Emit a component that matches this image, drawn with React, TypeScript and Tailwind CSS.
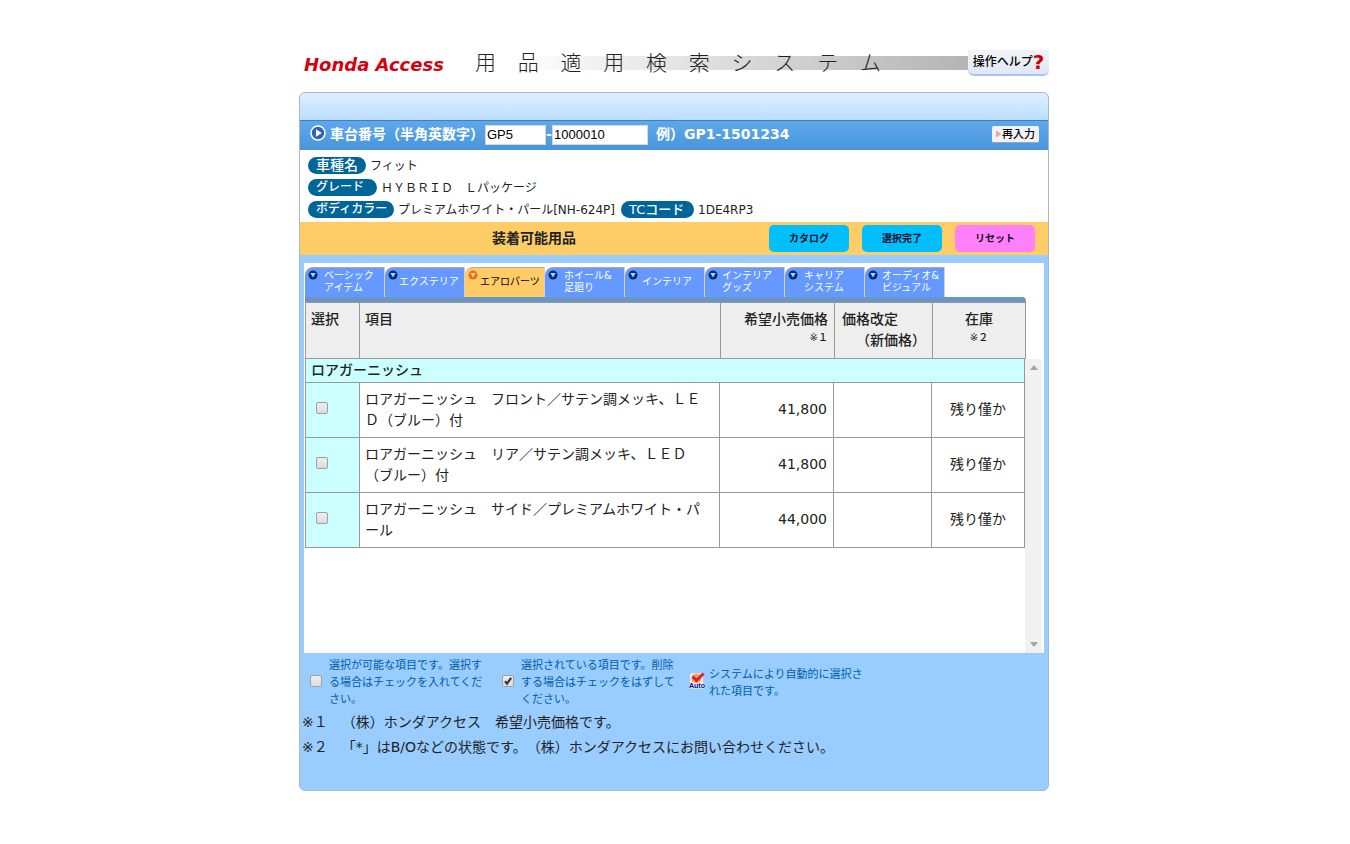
import { useState } from 'react';
import clsx from 'clsx';

interface Tab {
  id: string;
  lines: string[];
  gap: string;
}

interface Item {
  id: string;
  name: string;
  price: string;
  revised: string;
  stock: string;
}

const tabs: Tab[] = [
  { id: 'basic', lines: ['ベーシック', 'アイテム'], gap: 'pl-1.5' },
  { id: 'exterior', lines: ['エクステリア'], gap: 'pl-px' },
  { id: 'aero', lines: ['エアロパーツ'], gap: 'pl-0.5' },
  { id: 'wheel', lines: ['ホイール&', '足廻り'], gap: 'pl-1.5' },
  { id: 'interior', lines: ['インテリア'], gap: 'pl-1' },
  { id: 'goods', lines: ['インテリア', 'グッズ'], gap: 'pl-1' },
  { id: 'carrier', lines: ['キャリア', 'システム'], gap: 'pl-1.5' },
  { id: 'audio', lines: ['オーディオ&', 'ビジュアル'], gap: 'pl-1' },
];

const items: Item[] = [
  { id: 'front', name: 'ロアガーニッシュ　フロント／サテン調メッキ、ＬＥＤ（ブルー）付', price: '41,800', revised: '', stock: '残り僅か' },
  { id: 'rear', name: 'ロアガーニッシュ　リア／サテン調メッキ、ＬＥＤ（ブルー）付', price: '41,800', revised: '', stock: '残り僅か' },
  { id: 'side', name: 'ロアガーニッシュ　サイド／プレミアムホワイト・パール', price: '44,000', revised: '', stock: '残り僅か' },
];

const title = '用品適用検索システム';

const Badge = ({ text, width }: { text: string; width: string }) => (
  <span className={clsx('h-[17px] shrink-0 rounded-full bg-[#006699] pl-2 leading-[17px] font-medium text-white', width)}>
    {text}
  </span>
);

interface CheckProps {
  checked: boolean;
  onChange: () => void;
  id?: string;
  label?: string;
}

const Check = ({ checked, onChange, id, label }: CheckProps) => (
  <span className="relative block size-3 shrink-0">
    <input
      type="checkbox"
      id={id}
      aria-label={label}
      checked={checked}
      onChange={onChange}
      className="block size-3 appearance-none rounded-[2px] border border-[#a0a0a0] bg-linear-to-b from-[#eeeeee] to-[#dcdcdc]"
    />
    {checked && (
      <svg viewBox="0 0 12 12" className="pointer-events-none absolute inset-0 size-3">
        <path d="M3 6.2 5 8.6 9.2 2.8" fill="none" stroke="#333" strokeWidth="2.2" />
      </svg>
    )}
  </span>
);

const TabMark = ({ active }: { active: boolean }) => (
  <svg viewBox="0 0 10 10" className="size-[10px] shrink-0">
    <circle cx="5" cy="5" r="4.5" fill={active ? '#ee6a1c' : '#003080'} />
    <path d="M2.4 3h5.2L5 7.6z" fill={active ? '#ffd890' : '#b8d0ff'} />
  </svg>
);

const AutoMark = () => (
  <svg viewBox="0 0 16 17" className="h-[17px] w-4 shrink-0">
    <path d="M3 1h11v11H1V3z" fill="#fbe9dc" />
    <circle cx="7.5" cy="6.5" r="5" fill="#f2a65a" />
    <path d="M3.5 4.5 7.5 8.5 14.5 1.5" fill="none" stroke="#d81f3a" strokeWidth="3" />
    <text x="0" y="16" fontSize="7" fontWeight="bold" fontFamily="Liberation Sans, sans-serif" fill="#000080" stroke="#fff" strokeWidth="1" paintOrder="stroke">Auto</text>
  </svg>
);

const Columns = () => (
  <colgroup>
    <col className="w-[54px]" />
    <col />
    <col className="w-[114px]" />
    <col className="w-[98px]" />
    <col className="w-[93px]" />
  </colgroup>
);

const App = () => {
  const [frame, setFrame] = useState('GP5');
  const [serial, setSerial] = useState('1000010');
  const [activeTab, setActiveTab] = useState('aero');
  const [selected, setSelected] = useState<string[]>([]);
  const [legend, setLegend] = useState({ free: false, used: true });

  const toggle = (id: string) =>
    setSelected(prev => (prev.includes(id) ? prev.filter(x => x !== id) : [...prev, id]));

  return (
    <div lang="ja" className="min-h-screen bg-white pt-[50px] pr-0.5 pb-12 font-['DejaVu_Sans','Noto_Sans_CJK_JP',sans-serif] text-[14px] leading-[21px] text-[#222] [text-spacing-trim:space-all]">
      <div className="mx-auto max-w-[750px]">
        {/* Header */}
        <header className="flex h-[26px] items-center">
          <a href="#" className="w-[176px] shrink-0 pt-1 pl-[5px] text-[18px] leading-6 font-bold whitespace-nowrap text-[#d7000f] italic">Honda Access</a>
          <div className="flex-1 bg-[linear-gradient(to_right,#ffffff_8%,#b4b4b4)] bg-[length:100%_14px] bg-center bg-no-repeat">
            <h1 className="flex w-[406px] justify-between text-[21px] leading-[26px] font-light text-[#222]">
              {title.split('').map((c, i) => (
                <span key={i}>{c}</span>
              ))}
            </h1>
          </div>
          <button type="button" className="flex h-[26px] w-[81px] items-center justify-center rounded-b-md border-b-2 border-[#a9c4ee] bg-linear-to-b from-[#f3f3f6] to-[#dfe8f8] text-[12px] font-medium whitespace-nowrap text-black">
            <span className="-mr-1">操作ヘルプ</span>
            <span className="pl-1 text-[20px] font-bold text-[#cc0000]">?</span>
          </button>
        </header>

        <main className="mt-4 overflow-hidden rounded-md border border-[#a9b8cc] bg-[#99ccff]">
          <div className="h-7 border-b border-[#3f7fc4] bg-linear-to-b from-[#e0efff] to-[#bbddff]" />

          {/* Frame number search */}
          <form className="flex h-[29px] items-center bg-linear-to-b from-[#5fa8ea] to-[#4896dc] pr-[9px] pb-0.5 pl-2.5 font-bold text-white" onSubmit={e => e.preventDefault()}>
            <svg viewBox="0 0 16 16" className="mr-1 mb-1 size-4 shrink-0">
              <circle cx="8" cy="8" r="7" fill="#2f62b8" stroke="#fff" strokeWidth="1.6" />
              <path d="M6 4.2v7.6L11.8 8z" fill="#fff" />
            </svg>
            <label htmlFor="frame" className="w-[155px] shrink-0 whitespace-nowrap">車台番号（半角英数字）</label>
            <input
              id="frame"
              value={frame}
              onChange={e => setFrame(e.target.value)}
              className="h-5 w-[61px] border border-[#d8d8d8] bg-white px-px font-['Liberation_Sans',sans-serif] text-[13px] font-normal text-black"
            />
            <span className="w-[6px]">-</span>
            <input
              aria-label="車台番号（連番）"
              value={serial}
              onChange={e => setSerial(e.target.value)}
              className="h-5 w-24 border border-[#d8d8d8] bg-white px-px font-['Liberation_Sans',sans-serif] text-[13px] font-normal text-black"
            />
            <span className="pl-2 whitespace-nowrap">例）GP1-1501234</span>
            <button type="reset" className="ml-auto flex h-[17px] w-[47px] items-center justify-center rounded-xs border-b border-[#9aa4b8] bg-[#f1f1f6] text-[11px] font-medium whitespace-nowrap text-black">
              <svg viewBox="0 0 6 8" className="h-2 w-1.5 shrink-0">
                <path d="M0 0.5v7L5.5 4z" fill="#f0a3b4" />
              </svg>
              再入力
            </button>
          </form>

          {/* Vehicle information */}
          <section className="bg-white pt-1 pb-0.5 pl-2 text-[12px]">
            <div className="flex h-[22px] items-center gap-1">
              <Badge text="車種名" width="w-[58px] text-[14px]" />
              <span className="pt-0.5">フィット</span>
            </div>
            <div className="flex h-[22px] items-center gap-1">
              <Badge text="グレード" width="w-[69px]" />
              <span className="pt-0.5">ＨＹＢＲＩＤ　Ｌパッケージ</span>
            </div>
            <div className="flex h-[22px] items-center gap-1">
              <Badge text="ボディカラー" width="w-[86px]" />
              <span className="pt-0.5 pr-0.5">プレミアムホワイト・パール[NH-624P]</span>
              <Badge text="TCコード" width="w-[73px] text-[13px]" />
              <span className="pt-0.5">1DE4RP3</span>
            </div>
          </section>

          <div className="flex h-[33px] items-center gap-[13px] bg-[#ffcc66] pr-[13px] pl-3">
            <h2 className="flex-1 text-center font-bold">装着可能用品</h2>
            <button type="button" className="h-[27px] w-20 rounded-[5px] bg-[#00bfff] text-[10px] font-bold text-[#112]">カタログ</button>
            <button type="button" className="h-[27px] w-20 rounded-[5px] bg-[#00bfff] text-[10px] font-bold text-[#112]">選択完了</button>
            <button type="button" className="h-[27px] w-20 rounded-[5px] bg-[#ff80ff] text-[10px] font-bold text-[#112]" onClick={() => setSelected([])}>リセット</button>
          </div>

          <section className="mx-1 mt-2 bg-white pt-1 pl-px">
            <div role="tablist" className="flex h-[30px]">
              {tabs.map(tab => {
                const active = tab.id === activeTab;
                return (
                  <button
                    key={tab.id}
                    type="button"
                    role="tab"
                    aria-selected={active}
                    onClick={() => setActiveTab(tab.id)}
                    className={clsx(
                      'flex h-[30px] w-20 items-start rounded-tl-lg border-t border-r border-t-[#b0a8a8] border-r-[#d8d0c8] pt-0.5 pl-[3px] text-left text-[10px] leading-[12px] whitespace-nowrap',
                      active ? 'bg-[#ffcc66] text-black' : 'bg-[#6699ff] text-white',
                    )}
                  >
                    <TabMark active={active} />
                    <span className={clsx(tab.gap, tab.lines.length === 1 && 'pt-[6px]')}>
                      {tab.lines.map(line => (
                        <span key={line} className="block">{line}</span>
                      ))}
                    </span>
                  </button>
                );
              })}
            </div>
            <div className="mr-[18px] h-[5px] rounded-tr-sm bg-[#6996c6]" />

            {/* Column headings */}
            <div className="mr-[18px]">
              <table className="w-full table-fixed border-collapse bg-[#eeeeee]">
                <Columns />
                <thead>
                  <tr className="h-14 align-top">
                    <th className="border border-[#999] px-[5px] pt-1.5 text-left font-medium">選択</th>
                    <th className="border border-[#999] px-[5px] pt-1.5 text-left font-medium">項目</th>
                    <th className="border border-[#999] px-[6px] pt-1.5 text-right font-medium">
                      希望小売価格
                      <span className="block text-[10px] leading-4">※１</span>
                    </th>
                    <th className="border border-[#999] pt-1.5 pl-[7px] text-left font-medium">
                      価格改定
                      <span className="block pl-3.5 whitespace-nowrap">（新価格）</span>
                    </th>
                    <th className="border border-[#999] pt-1.5 text-center font-medium">
                      在庫
                      <span className="block text-[10px] leading-4">※２</span>
                    </th>
                  </tr>
                </thead>
              </table>
            </div>

            <div className="flex min-h-[294px] pr-0.5">
              <div className="flex-1">
                <table className="w-full table-fixed border-collapse">
                  <Columns />
                  <tbody>
                    <tr className="h-[23px] bg-[#ccffff]">
                      <th colSpan={5} className="border border-t-0 border-[#999] px-[5px] text-left font-medium">ロアガーニッシュ</th>
                    </tr>
                    {items.map(item => (
                      <tr key={item.id} className="h-[55px]">
                        <td className="border border-[#999] bg-[#ccffff] pb-1 pl-2.5">
                          <Check checked={selected.includes(item.id)} onChange={() => toggle(item.id)} label={item.name} />
                        </td>
                        <td className="border border-[#999] px-[5px] break-all">{item.name}</td>
                        <td className="border border-[#999] px-[6px] text-right">{item.price}</td>
                        <td className="border border-[#999]">{item.revised}</td>
                        <td className="border border-[#999] text-center">{item.stock}</td>
                      </tr>
                    ))}
                  </tbody>
                </table>
              </div>
              <div className="flex w-[17px] flex-col items-center justify-between bg-[#f1f1f1] py-1.5">
                <svg viewBox="0 0 8 5" className="h-[5px] w-2"><path d="M0 5 4 0l4 5z" fill="#a3a3a3" /></svg>
                <svg viewBox="0 0 8 5" className="h-[5px] w-2"><path d="M0 0 4 5l4-5z" fill="#a3a3a3" /></svg>
              </div>
            </div>
          </section>

          {/* Legend */}
          <section className="flex items-center pt-1 pl-2.5 text-[11px] leading-[17px] text-[#005ca8]">
            <span className="pb-1">
              <Check id="legend-free" checked={legend.free} onChange={() => setLegend(prev => ({ ...prev, free: !prev.free }))} />
            </span>
            <label htmlFor="legend-free" className="ml-[7px] w-[160px]">選択が可能な項目です。選択する場合はチェックを入れてください。</label>
            <span className="ml-[13px] pb-1">
              <Check id="legend-used" checked={legend.used} onChange={() => setLegend(prev => ({ ...prev, used: !prev.used }))} />
            </span>
            <label htmlFor="legend-used" className="ml-[7px] w-[160px]">選択されている項目です。削除する場合はチェックをはずしてください。</label>
            <span className="ml-2 pb-1"><AutoMark /></span>
            <p className="ml-1 w-[160px]">システムにより自動的に選択された項目です。</p>
          </section>

          <div className="pt-0.5 pb-[30px] pl-0.5 leading-[25px]">
            <p>※１　（株）ホンダアクセス　希望小売価格です。</p>
            <p>※２　「*」はB/Oなどの状態です。（株）ホンダアクセスにお問い合わせください。</p>
          </div>
        </main>
      </div>
    </div>
  );
};

export default App;
